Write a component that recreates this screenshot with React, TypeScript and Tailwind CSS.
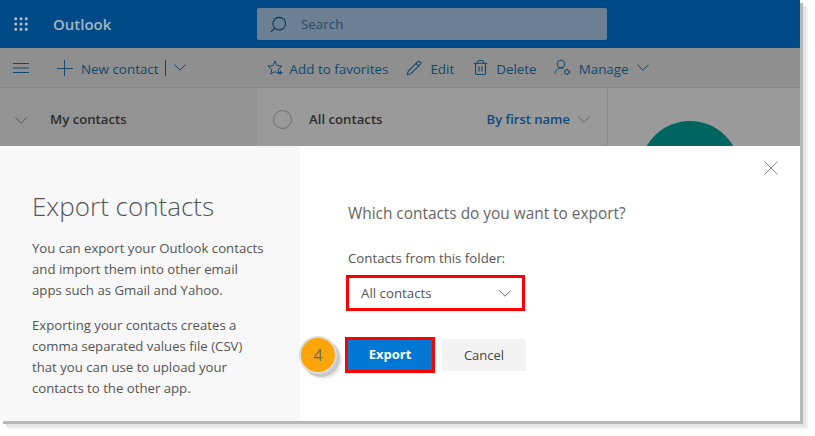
import React from 'react';
import { Grip, Pencil, Search, Trash2 } from 'lucide-react';

const ToolbarText = ({ children }: { children: React.ReactNode }) => (
  <span className="text-[13.4px] leading-5 text-[#0f4a6e] whitespace-nowrap">{children}</span>
);

const Chevron = ({ className }: { className: string }) => (
  <svg viewBox="0 0 12 7" className={`w-[12px] h-[7px] shrink-0 ${className}`} fill="none" stroke="currentColor" strokeWidth="1">
    <path d="M.4.6 6 6.200 11.600.6" />
  </svg>
);

export default function App() {
  return (
    <div className="w-[815px] h-[436px] bg-white overflow-hidden font-['Open_Sans','Noto_Sans',sans-serif]">
      <div className="w-[800px] h-[421px] flex flex-col shadow-[3px_3px_0_#b8b8b8,6px_6px_0_#e4e4e4,8px_8px_0_#f2f2f2] overflow-hidden">
        {/* Top bar */}
        <div className="h-12 shrink-0 bg-[#004a87] flex items-center">
          <Grip className="w-[18px] h-[18px] ml-3 text-[#b4c3cf]" strokeWidth={2} />
          <span className="ml-[23px] w-[204px] text-[15px] font-semibold text-[#a4b4c2]">Outlook</span>
          <div className="w-[350px] h-8 bg-[#6b8093] rounded-[2px] flex items-center pl-[12px] gap-[13px]">
            <Search className="w-[19px] h-[19px] text-[#0f3350] -scale-x-100" strokeWidth={1.3} />
            <span className="text-[13.4px] text-[#2f4a60]">Search</span>
          </div>
        </div>

        {/* Toolbar */}
        <div className="h-10 shrink-0 bg-[#8f8f8f] flex items-center text-[#0f4a6e] border-b border-[#868686]">
          <svg viewBox="0 0 16 10" className="w-[16px] h-[10px] ml-[13px] shrink-0" fill="none" stroke="#0f4a6e" strokeWidth="1">
            <path d="M0 .5h16M0 5h16M0 9.500h16" />
          </svg>
          <svg viewBox="0 0 16 16" className="w-[16px] h-[16px] ml-[28px] shrink-0" fill="none" stroke="#1b4a68" strokeWidth="1">
            <path d="M0 8.500h16M7.500 0v16" />
          </svg>
          <span className="ml-2"><ToolbarText>New contact</ToolbarText></span>
          <span className="ml-[6px] w-px h-[16px] bg-[#0f4a6e]" />
          <Chevron className="ml-2" />
          <svg viewBox="0 0 16 16" className="w-[16px] h-[16px] ml-[81px]" fill="none" stroke="#0f4a6e" strokeWidth="1">
            <path d="M8 1l2 4.6 5 .5-3.8 3.3 1 4.6L8 11.600 3.800 14l1-4.600L1 6.100l5-.5z" />
            <path d="M11.500 12.500h4M13.500 10.500v4" />
          </svg>
          <span className="ml-[7px]"><ToolbarText>Add to favorites</ToolbarText></span>
          <Pencil className="w-[16px] h-[16px] ml-[18px]" strokeWidth={1.6} />
          <span className="ml-2"><ToolbarText>Edit</ToolbarText></span>
          <Trash2 className="w-[17px] h-[17px] ml-[18px]" strokeWidth={1.5} />
          <span className="ml-[7px]"><ToolbarText>Delete</ToolbarText></span>
          <svg viewBox="0 0 17 17" className="w-[17px] h-[17px] ml-[17px]" fill="none" stroke="#0f4a6e" strokeWidth="1">
            <circle cx="7" cy="5" r="3.800" />
            <path d="M1 15c.3-3.500 2.500-6 6-6 1 0 1.700.2 2.400.5" />
            <circle cx="13" cy="13" r="2.300" strokeWidth="1.600" strokeDasharray="1.500 .8" />
          </svg>
          <span className="ml-2"><ToolbarText>Manage</ToolbarText></span>
          <Chevron className="ml-2" />
        </div>

        {/* Contacts list behind the dialog */}
        <div className="h-[58px] shrink-0 flex overflow-hidden">
          <div className="w-[257px] bg-[#939393] flex items-center pt-[6px] pl-[15px]">
            <Chevron className="text-[#555]" />
            <span className="ml-[23px] text-[13.2px] font-semibold text-[#2e2e2e]">My contacts</span>
          </div>
          <div className="w-[351px] bg-[#9a9a9a] border-r border-[#8c8c8c] flex items-center pt-[5px] pl-4 pr-[17px]">
            <span className="w-[19px] h-[19px] rounded-full border border-[#6e6e6e]" />
            <span className="ml-[17px] text-[13.2px] font-semibold text-[#2e2e2e]">All contacts</span>
            <span className="ml-auto text-[13px] font-semibold text-[#0f4a80]">By first name</span>
            <Chevron className="ml-2 text-[#5a6a78]" />
          </div>
          <div className="flex-1 bg-[#9a9a9a] flex justify-center pt-[33px] pr-[28px]">
            <div className="w-[100px] h-[100px] shrink-0 rounded-full bg-[#006560]" />
          </div>
        </div>

        {/* Dialog */}
        <div className="flex-1 flex bg-white">
          <div className="w-[300px] bg-[#f8f8f8] pl-8 pr-[33px] pt-[41px]">
            <h1 className="text-[26px] leading-[38px] font-light text-[#555] whitespace-nowrap">Export contacts</h1>
            <p className="mt-[13px] text-[13.2px] leading-[21px] text-[#555]">
              You can export your Outlook contacts and import them into other email apps such as Gmail and Yahoo.
            </p>
            <p className="mt-[14px] text-[13.2px] leading-[21px] text-[#555]">
              Exporting your contacts creates a comma separated values file (CSV) that you can use to upload your contacts to the other app.
            </p>
          </div>
          <div className="flex-1 pl-12 pr-[22px] pt-[15px] flex flex-col">
            <svg viewBox="0 0 14 14" className="w-[14px] h-[14px] self-end shrink-0" fill="none" stroke="#8a8a8a" strokeWidth="1">
              <path d="M.5.5l13 13M13.500.5l-13 13" />
            </svg>
            <p className="mt-[27px] text-[15.4px] leading-[24px] text-[#666]">Which contacts do you want to export?</p>
            <label className="mt-[22px] text-[13.25px] leading-5 text-[#555]">Contacts from this folder:</label>
            <div className="mt-[7px] -ml-[2px] w-[179px] h-[36px] border-[3px] border-[#ff0000] flex items-center pl-[12px] pr-[11px] pt-[1px]">
              <span className="text-[13.3px] text-[#555]">All contacts</span>
              <Chevron className="ml-auto text-[#666]" />
            </div>
            <div className="relative mt-[26px] flex items-center -ml-[3px]">
              <span className="absolute -left-[46px] top-[-1px] w-[38px] h-[38px] rounded-full bg-[#fca50a] border-2 border-[#dcdcdc] shadow-[3px_3px_0_#c8c8c8,5px_5px_2px_#e8e8e8] flex items-center justify-center text-[16px] text-[#6b6b6b]">4</span>
              <button className="w-[90px] h-[36px] bg-[#0078d4] border-[3px] border-[#ff0000] text-[13px] font-bold text-white">Export</button>
              <button className="ml-[7px] w-[84px] h-[32px] bg-[#f3f3f3] text-[13px] pt-[1px] text-[#444]">Cancel</button>
            </div>
          </div>
        </div>
      </div>
    </div>
  );
}
